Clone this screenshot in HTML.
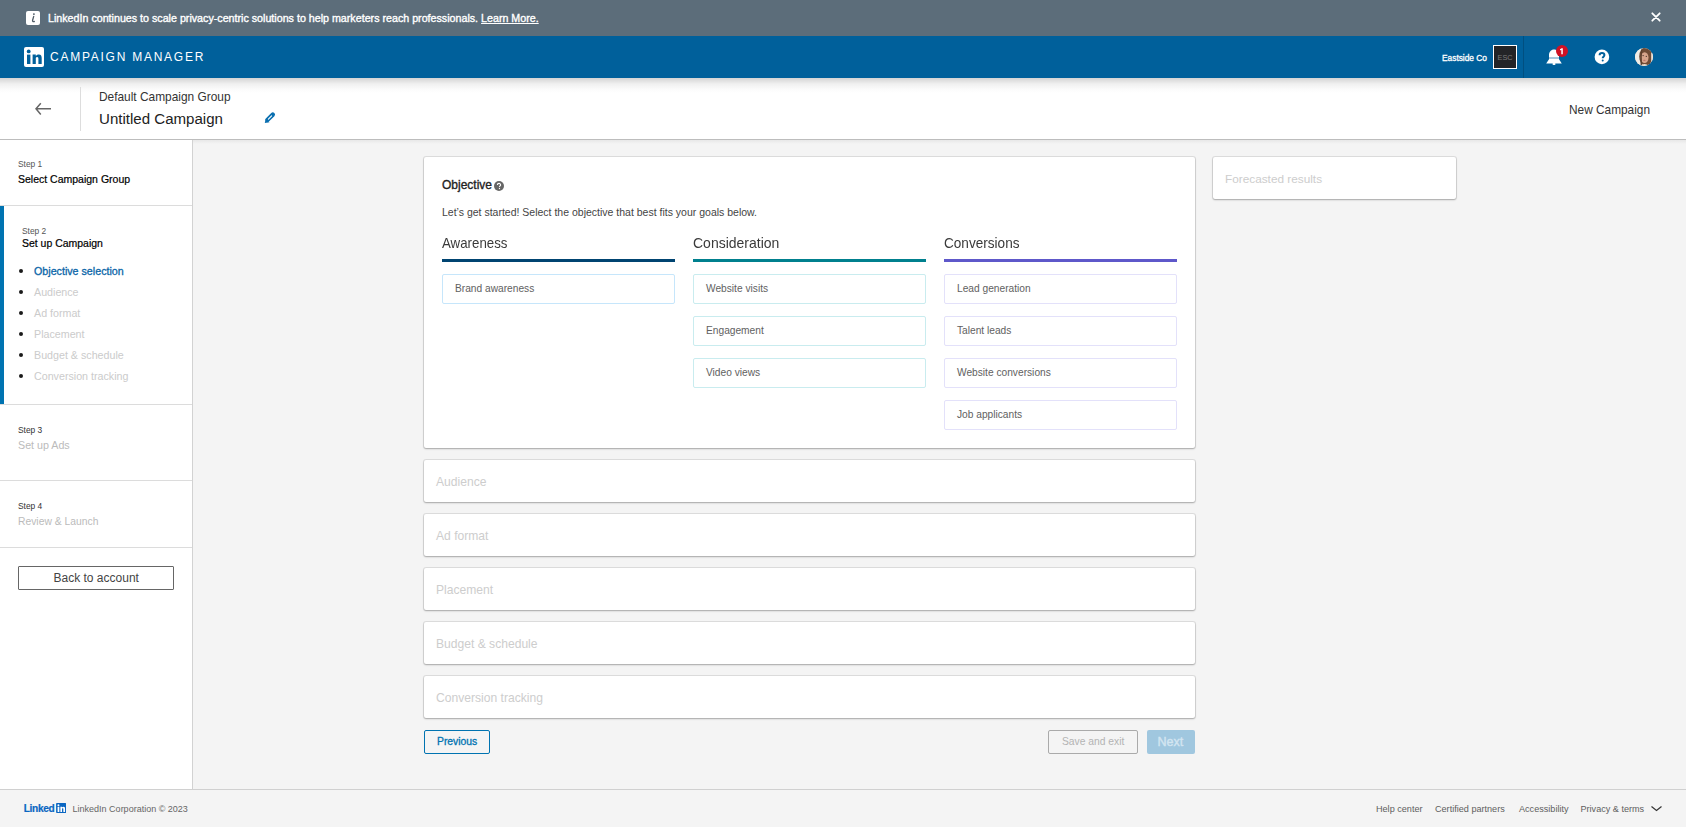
<!DOCTYPE html>
<html><head><meta charset="utf-8"><title>Campaign Manager</title>
<style>
html,body{margin:0;padding:0;width:1686px;height:827px;overflow:hidden;background:#f4f4f4}
body{position:relative;font-family:"Liberation Sans", sans-serif}
.t{position:absolute;white-space:nowrap;font-family:"Liberation Sans", sans-serif}
</style></head><body>
<div style="position:absolute;left:0px;top:0px;width:1686px;height:827px;background:#f4f4f4"></div>
<div style="position:absolute;left:0px;top:0px;width:1686px;height:36px;background:#5c6d7a"></div>
<div style="position:absolute;left:26px;top:11px;width:14px;height:14px;background:#fff;border-radius:2px"></div>
<svg style="position:absolute;left:26px;top:11px" width="14" height="14" viewBox="0 0 14 14"><circle cx="7.9" cy="3.1" r="0.95" fill="#4f5b66"/><path d="M7.7 5.4L6.6 9.2Q6.2 10.9 8.3 10.5" stroke="#4f5b66" stroke-width="1.3" fill="none" stroke-linecap="round"/></svg>
<div class="t" style="left:48px;top:12.66px;font-size:10.69px;line-height:10.69px;color:#fff;font-weight:400;-webkit-text-stroke:0.35px #fff">LinkedIn continues to scale privacy-centric solutions to help marketers reach professionals. <u>Learn More.</u></div>
<svg style="position:absolute;left:1650px;top:11px" width="12" height="12" viewBox="0 0 12 12"><path d="M2.3 2.3L9.7 9.7M9.7 2.3L2.3 9.7" stroke="#fff" stroke-width="1.8" stroke-linecap="round"/></svg>
<div style="position:absolute;left:0px;top:36px;width:1686px;height:42px;background:#00609b"></div>
<div style="position:absolute;left:24px;top:47px;width:20px;height:20px;background:#fff;border-radius:2px"></div>
<svg style="position:absolute;left:24px;top:47px" width="20" height="20" viewBox="0 0 20 20"><circle cx="4.7" cy="4.4" r="1.9" fill="#00609b"/><rect x="3" y="7.6" width="3.4" height="9.4" fill="#00609b"/><path d="M8.6 7.6h3.2v1.4c.5-.9 1.6-1.6 3-1.6 2.4 0 2.9 1.6 2.9 3.7V17h-3.3v-5.2c0-1-.2-1.9-1.3-1.9-1.2 0-1.3.9-1.3 1.9V17H8.6z" fill="#00609b"/></svg>
<div class="t" style="left:50px;top:51.00px;font-size:12px;line-height:12px;color:#fff;font-weight:400;letter-spacing:1.75px">CAMPAIGN MANAGER</div>
<div class="t" style="left:1442px;top:53.83px;font-size:8.35px;line-height:8.35px;color:#fff;font-weight:400;-webkit-text-stroke:0.3px #fff">Eastside Co</div>
<div style="position:absolute;left:1493px;top:45px;width:24px;height:24px;background:#232427;border:1px solid #fff;box-sizing:border-box"></div>
<div class="t" style="left:1497.6px;top:54.05px;font-size:7.3px;line-height:7.3px;color:#7a7a7a;font-weight:400;">ESC</div>
<div style="position:absolute;left:1523px;top:36px;width:1px;height:42px;background:#004f80"></div>
<svg style="position:absolute;left:1544px;top:44px" width="28" height="24" viewBox="0 0 28 24"><path d="M10 5.5c-3 0-5 2.5-5 5.5v4.2L2.2 19.5h15.6L15 15.2V11c0-3-2-5.5-5-5.5z" fill="#fff"/><rect x="8.5" y="19" width="3" height="2" rx="1" fill="#fff"/><rect x="2" y="13.6" width="16" height="0.8" fill="#00609b" fill-opacity="0.85"/><circle cx="18" cy="7" r="6" fill="#d11124"/><path d="M17.6 4.2l-1.6 1v1.3l1.3-.7V10.2h1.5V4.2z" fill="#fff"/></svg>
<svg style="position:absolute;left:1594px;top:49px" width="16" height="16" viewBox="0 0 16 16"><circle cx="7.9" cy="7.9" r="7.3" fill="#fff"/><path d="M5.6 6.2c0-1.4 1-2.3 2.4-2.3s2.4.9 2.4 2.2c0 1.6-1.7 1.8-1.7 3.1" stroke="#00609b" stroke-width="2" fill="none"/><circle cx="8.7" cy="11.6" r="1" fill="#00609b"/></svg>
<svg style="position:absolute;left:1635px;top:48px" width="18" height="18" viewBox="0 0 18 18"><defs><clipPath id="av"><circle cx="9" cy="9" r="9"/></clipPath><filter id="bl" x="-10%" y="-10%" width="120%" height="120%"><feGaussianBlur stdDeviation="0.45"/></filter></defs><g clip-path="url(#av)"><rect width="18" height="18" fill="#e9e1d6"/><g filter="url(#bl)"><rect x="0" y="0" width="6" height="18" fill="#f1ece5"/><ellipse cx="10.8" cy="8.5" rx="6.6" ry="9.5" fill="#6f4c36"/><ellipse cx="9.6" cy="9.6" rx="3.9" ry="5.4" fill="#d7a48b"/><path d="M6.2 1.5Q4.8 9 5.6 17L7 17Q6.4 9 7.2 2z" fill="#5b3d2b"/><circle cx="8.1" cy="7.6" r="0.65" fill="#3b2a22"/><circle cx="11.3" cy="8.3" r="0.65" fill="#3b2a22"/><ellipse cx="9.4" cy="12.3" rx="1.2" ry="0.55" fill="#b8675c"/><rect x="16.2" y="5" width="2" height="12" fill="#eee6dc"/><ellipse cx="9.5" cy="17.5" rx="3" ry="1.5" fill="#e8d9c8"/></g></g></svg>
<div style="position:absolute;left:0px;top:78px;width:1686px;height:61px;background:#fff"></div>
<div style="position:absolute;left:0px;top:78px;width:1686px;height:15px;background:linear-gradient(rgba(0,0,0,0.17),rgba(0,0,0,0.06) 40%,rgba(0,0,0,0.015) 75%,rgba(0,0,0,0))"></div>
<div style="position:absolute;left:0px;top:139px;width:1686px;height:1px;background:#bdbdbd"></div>
<div style="position:absolute;left:193px;top:140px;width:1493px;height:4px;background:linear-gradient(rgba(0,0,0,0.05),rgba(0,0,0,0))"></div>
<svg style="position:absolute;left:33px;top:101px" width="20" height="16" viewBox="0 0 20 16"><path d="M18 7.8H3.2M7.8 2.2L3 7.8l4.8 5.6" stroke="#666" stroke-width="1.5" fill="none"/></svg>
<div style="position:absolute;left:80px;top:87px;width:1px;height:44px;background:#ddd"></div>
<div class="t" style="left:99px;top:91.85px;font-size:11.9px;line-height:11.9px;color:#333;font-weight:400;">Default Campaign Group</div>
<div class="t" style="left:99px;top:110.97px;font-size:15.07px;line-height:15.07px;color:#222;font-weight:400;">Untitled Campaign</div>
<svg style="position:absolute;left:263px;top:111px" width="14" height="14" viewBox="0 0 14 14"><path d="M4.6 8.8L9.8 3.6" stroke="#0a6fb0" stroke-width="4.4" stroke-linecap="round"/><path d="M1.8 12l0.9-4.6 3.8 3.8z" fill="#0a6fb0"/><path d="M5.4 8.1L8.6 4.9" stroke="#fff" stroke-width="1.1" stroke-linecap="round"/></svg>
<div class="t" style="right:36px;top:104.67px;font-size:11.85px;line-height:11.85px;color:#333;font-weight:400;">New Campaign</div>
<div style="position:absolute;left:0px;top:140px;width:192px;height:649px;background:#fff"></div>
<div style="position:absolute;left:192px;top:140px;width:1px;height:649px;background:#d2d2d2"></div>
<div class="t" style="left:18px;top:159.80px;font-size:8.4px;line-height:8.4px;color:#555;font-weight:400;">Step 1</div>
<div class="t" style="left:18px;top:173.75px;font-size:10.5px;line-height:10.5px;color:#000;font-weight:400;-webkit-text-stroke:0.2px #000">Select Campaign Group</div>
<div style="position:absolute;left:0px;top:205px;width:192px;height:1px;background:#dcdcdc"></div>
<div style="position:absolute;left:0px;top:206px;width:4px;height:198px;background:#0073b1"></div>
<div class="t" style="left:22px;top:226.80px;font-size:8.4px;line-height:8.4px;color:#555;font-weight:400;">Step 2</div>
<div class="t" style="left:22px;top:239.06px;font-size:10.48px;line-height:10.48px;color:#000;font-weight:400;-webkit-text-stroke:0.2px #000">Set up Campaign</div>
<div style="position:absolute;left:19.3px;top:269px;width:4.0px;height:4px;background:#1a1a1a;border-radius:50%"></div>
<div class="t" style="left:34px;top:265.65px;font-size:10.7px;line-height:10.7px;color:#0b66a8;font-weight:400;-webkit-text-stroke:0.3px #0b66a8">Objective selection</div>
<div style="position:absolute;left:19.3px;top:290px;width:4.0px;height:4px;background:#1a1a1a;border-radius:50%"></div>
<div class="t" style="left:34px;top:286.65px;font-size:10.7px;line-height:10.7px;color:#cbcbcb;font-weight:400;">Audience</div>
<div style="position:absolute;left:19.3px;top:311px;width:4.0px;height:4px;background:#1a1a1a;border-radius:50%"></div>
<div class="t" style="left:34px;top:307.65px;font-size:10.7px;line-height:10.7px;color:#cbcbcb;font-weight:400;">Ad format</div>
<div style="position:absolute;left:19.3px;top:332px;width:4.0px;height:4px;background:#1a1a1a;border-radius:50%"></div>
<div class="t" style="left:34px;top:328.65px;font-size:10.7px;line-height:10.7px;color:#cbcbcb;font-weight:400;">Placement</div>
<div style="position:absolute;left:19.3px;top:353px;width:4.0px;height:4px;background:#1a1a1a;border-radius:50%"></div>
<div class="t" style="left:34px;top:349.65px;font-size:10.7px;line-height:10.7px;color:#cbcbcb;font-weight:400;">Budget &amp; schedule</div>
<div style="position:absolute;left:19.3px;top:374px;width:4.0px;height:4px;background:#1a1a1a;border-radius:50%"></div>
<div class="t" style="left:34px;top:370.65px;font-size:10.7px;line-height:10.7px;color:#cbcbcb;font-weight:400;">Conversion tracking</div>
<div style="position:absolute;left:0px;top:404px;width:192px;height:1px;background:#dcdcdc"></div>
<div class="t" style="left:18px;top:426.20px;font-size:8.4px;line-height:8.4px;color:#333;font-weight:400;">Step 3</div>
<div class="t" style="left:18px;top:439.65px;font-size:10.7px;line-height:10.7px;color:#bbb;font-weight:400;">Set up Ads</div>
<div style="position:absolute;left:0px;top:480px;width:192px;height:1px;background:#dcdcdc"></div>
<div class="t" style="left:18px;top:502.10px;font-size:8.4px;line-height:8.4px;color:#333;font-weight:400;">Step 4</div>
<div class="t" style="left:18px;top:516.63px;font-size:10.33px;line-height:10.33px;color:#bbb;font-weight:400;">Review &amp; Launch</div>
<div style="position:absolute;left:0px;top:547px;width:192px;height:1px;background:#dcdcdc"></div>
<div style="position:absolute;left:18px;top:566px;width:156px;height:24px;border:1px solid #666;box-sizing:border-box;border-radius:1px"></div>
<div class="t" style="left:53.5px;top:572.00px;font-size:12px;line-height:12px;color:#444;font-weight:400;">Back to account</div>
<div style="position:absolute;left:424px;top:157px;width:771px;height:291px;background:#fff;border-radius:2px;box-shadow:0 0 0 1px rgba(0,0,0,0.09),0 1px 2px rgba(0,0,0,0.25)"></div>
<div class="t" style="left:442px;top:179.00px;font-size:12.0px;line-height:12.0px;color:#222;font-weight:400;-webkit-text-stroke:0.35px #222">Objective</div>
<svg style="position:absolute;left:494px;top:181px" width="10" height="10" viewBox="0 0 10 10"><circle cx="5" cy="5" r="5" fill="#666"/><path d="M3.4 4c0-1 .7-1.6 1.6-1.6s1.6.6 1.6 1.5c0 1-1.1 1.1-1.1 2" stroke="#fff" stroke-width="1.1" fill="none"/><circle cx="5.5" cy="7.5" r=".65" fill="#fff"/></svg>
<div class="t" style="left:442px;top:206.75px;font-size:10.5px;line-height:10.5px;color:#444;font-weight:400;">Let&#8217;s get started! Select the objective that best fits your goals below.</div>
<div class="t" style="left:442px;top:234.80px;font-size:15px;line-height:15px;color:#3a3a3a;font-weight:400;transform:scaleX(0.8860);transform-origin:0 0">Awareness</div>
<div style="position:absolute;left:442px;top:259px;width:233px;height:3px;background:#004471"></div>
<div style="position:absolute;left:442px;top:274px;width:233px;height:30px;border:1px solid #c6e6fb;box-sizing:border-box;border-radius:2px"></div>
<div class="t" style="left:455px;top:284.30px;font-size:10.2px;line-height:10.2px;color:#616161;font-weight:400;">Brand awareness</div>
<div class="t" style="left:693px;top:234.80px;font-size:15px;line-height:15px;color:#3a3a3a;font-weight:400;transform:scaleX(0.9324);transform-origin:0 0">Consideration</div>
<div style="position:absolute;left:693px;top:259px;width:233px;height:3px;background:#00808e"></div>
<div style="position:absolute;left:693px;top:274px;width:233px;height:30px;border:1px solid #c9ecef;box-sizing:border-box;border-radius:2px"></div>
<div class="t" style="left:706px;top:284.30px;font-size:10.2px;line-height:10.2px;color:#616161;font-weight:400;">Website visits</div>
<div style="position:absolute;left:693px;top:316px;width:233px;height:30px;border:1px solid #c9ecef;box-sizing:border-box;border-radius:2px"></div>
<div class="t" style="left:706px;top:326.30px;font-size:10.2px;line-height:10.2px;color:#616161;font-weight:400;">Engagement</div>
<div style="position:absolute;left:693px;top:358px;width:233px;height:30px;border:1px solid #c9ecef;box-sizing:border-box;border-radius:2px"></div>
<div class="t" style="left:706px;top:368.30px;font-size:10.2px;line-height:10.2px;color:#616161;font-weight:400;">Video views</div>
<div class="t" style="left:944px;top:234.80px;font-size:15px;line-height:15px;color:#3a3a3a;font-weight:400;transform:scaleX(0.9056);transform-origin:0 0">Conversions</div>
<div style="position:absolute;left:944px;top:259px;width:233px;height:3px;background:#5e58ca"></div>
<div style="position:absolute;left:944px;top:274px;width:233px;height:30px;border:1px solid #e3e1fa;box-sizing:border-box;border-radius:2px"></div>
<div class="t" style="left:957px;top:284.30px;font-size:10.2px;line-height:10.2px;color:#616161;font-weight:400;">Lead generation</div>
<div style="position:absolute;left:944px;top:316px;width:233px;height:30px;border:1px solid #e3e1fa;box-sizing:border-box;border-radius:2px"></div>
<div class="t" style="left:957px;top:326.30px;font-size:10.2px;line-height:10.2px;color:#616161;font-weight:400;">Talent leads</div>
<div style="position:absolute;left:944px;top:358px;width:233px;height:30px;border:1px solid #e3e1fa;box-sizing:border-box;border-radius:2px"></div>
<div class="t" style="left:957px;top:368.30px;font-size:10.2px;line-height:10.2px;color:#616161;font-weight:400;">Website conversions</div>
<div style="position:absolute;left:944px;top:400px;width:233px;height:30px;border:1px solid #e3e1fa;box-sizing:border-box;border-radius:2px"></div>
<div class="t" style="left:957px;top:410.30px;font-size:10.2px;line-height:10.2px;color:#616161;font-weight:400;">Job applicants</div>
<div style="position:absolute;left:424px;top:460px;width:771px;height:42px;background:#fff;border-radius:2px;box-shadow:0 0 0 1px rgba(0,0,0,0.09),0 1px 2px rgba(0,0,0,0.25)"></div>
<div class="t" style="left:436px;top:475.55px;font-size:12.1px;line-height:12.1px;color:#cdcdcd;font-weight:400;">Audience</div>
<div style="position:absolute;left:424px;top:514px;width:771px;height:42px;background:#fff;border-radius:2px;box-shadow:0 0 0 1px rgba(0,0,0,0.09),0 1px 2px rgba(0,0,0,0.25)"></div>
<div class="t" style="left:436px;top:529.55px;font-size:12.1px;line-height:12.1px;color:#cdcdcd;font-weight:400;">Ad format</div>
<div style="position:absolute;left:424px;top:568px;width:771px;height:42px;background:#fff;border-radius:2px;box-shadow:0 0 0 1px rgba(0,0,0,0.09),0 1px 2px rgba(0,0,0,0.25)"></div>
<div class="t" style="left:436px;top:583.55px;font-size:12.1px;line-height:12.1px;color:#cdcdcd;font-weight:400;">Placement</div>
<div style="position:absolute;left:424px;top:622px;width:771px;height:42px;background:#fff;border-radius:2px;box-shadow:0 0 0 1px rgba(0,0,0,0.09),0 1px 2px rgba(0,0,0,0.25)"></div>
<div class="t" style="left:436px;top:637.55px;font-size:12.1px;line-height:12.1px;color:#cdcdcd;font-weight:400;">Budget &amp; schedule</div>
<div style="position:absolute;left:424px;top:676px;width:771px;height:42px;background:#fff;border-radius:2px;box-shadow:0 0 0 1px rgba(0,0,0,0.09),0 1px 2px rgba(0,0,0,0.25)"></div>
<div class="t" style="left:436px;top:691.55px;font-size:12.1px;line-height:12.1px;color:#cdcdcd;font-weight:400;">Conversion tracking</div>
<div style="position:absolute;left:1213px;top:157px;width:243px;height:42px;background:#fff;border-radius:2px;box-shadow:0 0 0 1px rgba(0,0,0,0.09),0 1px 2px rgba(0,0,0,0.25)"></div>
<div class="t" style="left:1225px;top:173.70px;font-size:11.8px;line-height:11.8px;color:#cdcdcd;font-weight:400;">Forecasted results</div>
<div style="position:absolute;left:424px;top:730px;width:66px;height:24px;border:1px solid #0073b1;box-sizing:border-box;border-radius:2px"></div>
<div class="t" style="left:437px;top:737.12px;font-size:10.36px;line-height:10.36px;color:#0073b1;font-weight:400;-webkit-text-stroke:0.3px #0073b1">Previous</div>
<div style="position:absolute;left:1048px;top:730px;width:90px;height:24px;border:1px solid #aaa;box-sizing:border-box;border-radius:2px"></div>
<div class="t" style="left:1062px;top:737.15px;font-size:10.3px;line-height:10.3px;color:#b3b3b3;font-weight:400;">Save and exit</div>
<div style="position:absolute;left:1147px;top:730px;width:48px;height:24px;background:#a0c7df;border-radius:2px"></div>
<div class="t" style="left:1157.6px;top:735.75px;font-size:12.5px;line-height:12.5px;color:#d3e5f1;font-weight:400;-webkit-text-stroke:0.4px #d3e5f1">Next</div>
<div style="position:absolute;left:0px;top:789px;width:1686px;height:1px;background:#d0d0d0"></div>
<div class="t" style="left:23.8px;top:803.95px;font-size:10.1px;line-height:10.1px;color:#0a66c2;font-weight:700;letter-spacing:-0.35px;-webkit-text-stroke:0.2px #0a66c2">Linked</div>
<svg style="position:absolute;left:55.7px;top:803px" width="10.2" height="10" viewBox="0 0 20 20"><rect width="20" height="20" rx="1.5" fill="#0a66c2"/><circle cx="4.7" cy="4.4" r="2" fill="#fff"/><rect x="3" y="7.6" width="3.5" height="10.4" fill="#fff"/><path d="M8.6 7.6h3.3v1.4c.5-.9 1.6-1.6 3-1.6 2.4 0 3 1.6 3 3.7V18h-3.4v-5.8c0-1-.2-1.9-1.3-1.9-1.2 0-1.3.9-1.3 1.9V18H8.6z" fill="#fff"/></svg>
<div class="t" style="left:72.6px;top:804.50px;font-size:9.0px;line-height:9.0px;color:#666;font-weight:400;">LinkedIn Corporation &#169; 2023</div>
<div class="t" style="left:1376px;top:805.25px;font-size:9.1px;line-height:9.1px;color:#5e5e5e;font-weight:400;">Help center</div>
<div class="t" style="left:1435px;top:805.25px;font-size:9.1px;line-height:9.1px;color:#5e5e5e;font-weight:400;">Certified partners</div>
<div class="t" style="left:1519px;top:805.25px;font-size:9.1px;line-height:9.1px;color:#5e5e5e;font-weight:400;">Accessibility</div>
<div class="t" style="left:1580.5px;top:805.25px;font-size:9.1px;line-height:9.1px;color:#5e5e5e;font-weight:400;">Privacy &amp; terms</div>
<svg style="position:absolute;left:1650px;top:804px" width="13" height="9" viewBox="0 0 13 9"><path d="M1.5 2.5l5 4 5-4" stroke="#333" stroke-width="1.2" fill="none"/></svg>
</body></html>
